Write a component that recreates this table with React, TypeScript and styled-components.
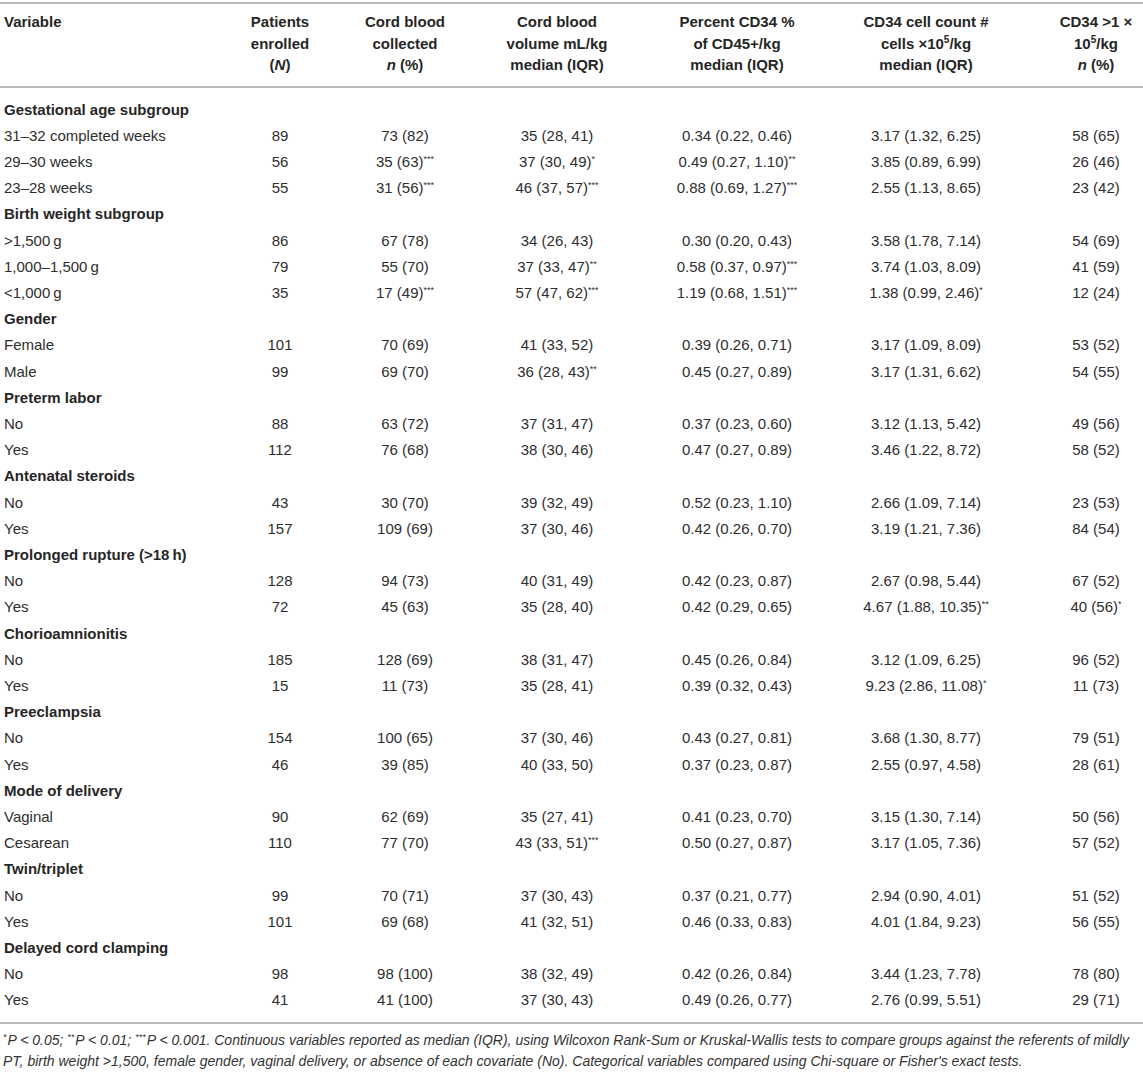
import React from "react";
import styled, { createGlobalStyle } from "styled-components";

const Global = createGlobalStyle`
  html, body { margin: 0; padding: 0; background: #ffffff; }
  body { font-family: "Liberation Sans", Arial, Helvetica, sans-serif; color: #2e2e2e; }
`;

const Page = styled.div`
  width: 1143px;
  padding-top: 2px;
`;

const Table = styled.table`
  width: 1143px;
  table-layout: fixed;
  border-collapse: collapse;
  font-size: 15px;

  th:nth-child(7), td:nth-child(7) { padding-left: 27px; }
`;

const HeadRow = styled.tr`
  border-top: 2px solid #b9b9b9;
  border-bottom: 2px solid #b9b9b9;
`;

const HeadCell = styled.th<{ $left?: boolean }>`
  font-weight: bold;
  color: #262626;
  text-align: ${(p) => (p.$left ? "left" : "center")};
  vertical-align: top;
  line-height: 21.5px;
  padding: 7px ${(p) => (p.$left ? "4px" : "0")} 10px;
`;

const Body = styled.tbody`
  tr:first-child > td { padding-top: 12px; }
  tr:last-child > td { padding-bottom: 11px; }
  tr:last-child { border-bottom: 2px solid #b9b9b9; }
`;

const Cell = styled.td<{ $left?: boolean }>`
  text-align: ${(p) => (p.$left ? "left" : "center")};
  line-height: 20.2px;
  padding: 3px 0 3px ${(p) => (p.$left ? "4px" : "0")};
  white-space: nowrap;
`;

const SectionCell = styled.td`
  font-weight: bold;
  color: #262626;
  line-height: 20.2px;
  padding: 3px 4px;
  white-space: nowrap;
`;

const Star = styled.sup`
  font-size: 9px;
  line-height: 0;
  vertical-align: 5px;
`;

const Exp = styled.sup`
  font-size: 10px;
  line-height: 0;
  vertical-align: 6px;
`;

const Footnote = styled.p`
  margin: 0;
  padding: 6px 3px 0;
  font-size: 14px;
  font-style: italic;
  line-height: 21px;
  color: #333;
`;

const FootStar = styled.sup`
  font-size: 9px;
  line-height: 0;
  vertical-align: 5px;
  margin-right: 1px;
`;

type Row = [string, string, string, string, string, string, string];
type Section = { title: string; rows: Row[] };

const sections: Section[] = [
  {
    title: "Gestational age subgroup",
    rows: [
      ["31–32 completed weeks", "89", "73 (82)", "35 (28, 41)", "0.34 (0.22, 0.46)", "3.17 (1.32, 6.25)", "58 (65)"],
      ["29–30 weeks", "56", "35 (63)***", "37 (30, 49)*", "0.49 (0.27, 1.10)**", "3.85 (0.89, 6.99)", "26 (46)"],
      ["23–28 weeks", "55", "31 (56)***", "46 (37, 57)***", "0.88 (0.69, 1.27)***", "2.55 (1.13, 8.65)", "23 (42)"],
    ],
  },
  {
    title: "Birth weight subgroup",
    rows: [
      [">1,500\u2009g", "86", "67 (78)", "34 (26, 43)", "0.30 (0.20, 0.43)", "3.58 (1.78, 7.14)", "54 (69)"],
      ["1,000–1,500\u2009g", "79", "55 (70)", "37 (33, 47)**", "0.58 (0.37, 0.97)***", "3.74 (1.03, 8.09)", "41 (59)"],
      ["<1,000\u2009g", "35", "17 (49)***", "57 (47, 62)***", "1.19 (0.68, 1.51)***", "1.38 (0.99, 2.46)*", "12 (24)"],
    ],
  },
  {
    title: "Gender",
    rows: [
      ["Female", "101", "70 (69)", "41 (33, 52)", "0.39 (0.26, 0.71)", "3.17 (1.09, 8.09)", "53 (52)"],
      ["Male", "99", "69 (70)", "36 (28, 43)**", "0.45 (0.27, 0.89)", "3.17 (1.31, 6.62)", "54 (55)"],
    ],
  },
  {
    title: "Preterm labor",
    rows: [
      ["No", "88", "63 (72)", "37 (31, 47)", "0.37 (0.23, 0.60)", "3.12 (1.13, 5.42)", "49 (56)"],
      ["Yes", "112", "76 (68)", "38 (30, 46)", "0.47 (0.27, 0.89)", "3.46 (1.22, 8.72)", "58 (52)"],
    ],
  },
  {
    title: "Antenatal steroids",
    rows: [
      ["No", "43", "30 (70)", "39 (32, 49)", "0.52 (0.23, 1.10)", "2.66 (1.09, 7.14)", "23 (53)"],
      ["Yes", "157", "109 (69)", "37 (30, 46)", "0.42 (0.26, 0.70)", "3.19 (1.21, 7.36)", "84 (54)"],
    ],
  },
  {
    title: "Prolonged rupture (>18\u2009h)",
    rows: [
      ["No", "128", "94 (73)", "40 (31, 49)", "0.42 (0.23, 0.87)", "2.67 (0.98, 5.44)", "67 (52)"],
      ["Yes", "72", "45 (63)", "35 (28, 40)", "0.42 (0.29, 0.65)", "4.67 (1.88, 10.35)**", "40 (56)*"],
    ],
  },
  {
    title: "Chorioamnionitis",
    rows: [
      ["No", "185", "128 (69)", "38 (31, 47)", "0.45 (0.26, 0.84)", "3.12 (1.09, 6.25)", "96 (52)"],
      ["Yes", "15", "11 (73)", "35 (28, 41)", "0.39 (0.32, 0.43)", "9.23 (2.86, 11.08)*", "11 (73)"],
    ],
  },
  {
    title: "Preeclampsia",
    rows: [
      ["No", "154", "100 (65)", "37 (30, 46)", "0.43 (0.27, 0.81)", "3.68 (1.30, 8.77)", "79 (51)"],
      ["Yes", "46", "39 (85)", "40 (33, 50)", "0.37 (0.23, 0.87)", "2.55 (0.97, 4.58)", "28 (61)"],
    ],
  },
  {
    title: "Mode of delivery",
    rows: [
      ["Vaginal", "90", "62 (69)", "35 (27, 41)", "0.41 (0.23, 0.70)", "3.15 (1.30, 7.14)", "50 (56)"],
      ["Cesarean", "110", "77 (70)", "43 (33, 51)***", "0.50 (0.27, 0.87)", "3.17 (1.05, 7.36)", "57 (52)"],
    ],
  },
  {
    title: "Twin/triplet",
    rows: [
      ["No", "99", "70 (71)", "37 (30, 43)", "0.37 (0.21, 0.77)", "2.94 (0.90, 4.01)", "51 (52)"],
      ["Yes", "101", "69 (68)", "41 (32, 51)", "0.46 (0.33, 0.83)", "4.01 (1.84, 9.23)", "56 (55)"],
    ],
  },
  {
    title: "Delayed cord clamping",
    rows: [
      ["No", "98", "98 (100)", "38 (32, 49)", "0.42 (0.26, 0.84)", "3.44 (1.23, 7.78)", "78 (80)"],
      ["Yes", "41", "41 (100)", "37 (30, 43)", "0.49 (0.26, 0.77)", "2.76 (0.99, 5.51)", "29 (71)"],
    ],
  },
];

const Value: React.FC<{ text: string }> = ({ text }) => {
  const m = text.match(/^(.*?)(\*+)$/);
  if (!m) return <>{text}</>;
  return (
    <>
      {m[1]}
      <Star>{m[2]}</Star>
    </>
  );
};

const widths = [220, 120, 130, 174, 186, 192, 121];

export default function App() {
  return (
    <Page>
      <Global />
      <Table>
        <colgroup>
          {widths.map((w, i) => (
            <col key={i} style={{ width: w }} />
          ))}
        </colgroup>
        <thead>
          <HeadRow>
            <HeadCell $left>Variable</HeadCell>
            <HeadCell>
              Patients
              <br />
              enrolled
              <br />(<i>N</i>)
            </HeadCell>
            <HeadCell>
              Cord blood
              <br />
              collected
              <br />
              <i>n</i> (%)
            </HeadCell>
            <HeadCell>
              Cord blood
              <br />
              volume mL/kg
              <br />
              median (IQR)
            </HeadCell>
            <HeadCell>
              Percent CD34 %
              <br />
              of CD45+/kg
              <br />
              median (IQR)
            </HeadCell>
            <HeadCell>
              CD34 cell count #
              <br />
              cells ×10<Exp>5</Exp>/kg
              <br />
              median (IQR)
            </HeadCell>
            <HeadCell>
              CD34 {">"}1 ×
              <br />
              10<Exp>5</Exp>/kg
              <br />
              <i>n</i> (%)
            </HeadCell>
          </HeadRow>
        </thead>
        <Body>
          {sections.map((s) => (
            <React.Fragment key={s.title}>
              <tr>
                <SectionCell colSpan={7}>{s.title}</SectionCell>
              </tr>
              {s.rows.map((r, ri) => (
                <tr key={ri}>
                  {r.map((c, ci) => (
                    <Cell key={ci} $left={ci === 0}>
                      <Value text={c} />
                    </Cell>
                  ))}
                </tr>
              ))}
            </React.Fragment>
          ))}
        </Body>
      </Table>
      <Footnote>
        <FootStar>*</FootStar>P &lt; 0.05; <FootStar>**</FootStar>P &lt; 0.01; <FootStar>***</FootStar>P &lt; 0.001.
        Continuous variables reported as median (IQR), using Wilcoxon Rank-Sum or Kruskal-Wallis tests to compare
        groups against the referents of mildly PT, birth weight &gt;1,500, female gender, vaginal delivery, or absence
        of each covariate (No). Categorical variables compared using Chi-square or Fisher's exact tests.
      </Footnote>
    </Page>
  );
}
